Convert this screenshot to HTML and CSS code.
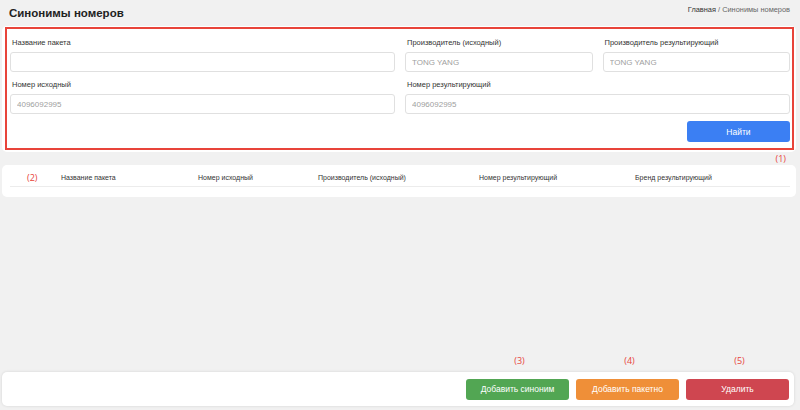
FILE: index.html
```html
<!DOCTYPE html>
<html lang="ru">
<head>
<meta charset="utf-8">
<title>Синонимы номеров</title>
<link rel="stylesheet" href="styles.css">
</head>
<body>
<div class="page">
  <header class="topbar">
    <h1 class="title">Синонимы номеров</h1>
    <nav class="crumbs"><span class="crumb-home">Главная</span> / Синонимы номеров</nav>
  </header>

  <section class="card form-card">
    <div class="mark-box">
      <div class="form-grid">
        <div class="field span2">
          <label class="label">Название пакета</label>
          <input class="input" type="text">
        </div>
        <div class="field">
          <label class="label">Производитель (исходный)</label>
          <input class="input" type="text" placeholder="TONG YANG">
        </div>
        <div class="field">
          <label class="label">Производитель результирующий</label>
          <input class="input" type="text" placeholder="TONG YANG">
        </div>
        <div class="field span2">
          <label class="label">Номер исходный</label>
          <input class="input" type="text" placeholder="4096092995">
        </div>
        <div class="field span2">
          <label class="label">Номер результирующий</label>
          <input class="input" type="text" placeholder="4096092995">
        </div>
      </div>
      <div class="form-actions">
        <button class="btn btn-blue">Найти</button>
      </div>
    </div>
  </section>
  <div class="note-row"><span class="note note-1">(1)</span></div>

  <section class="card table-card">
    <div class="thead">
      <div class="th th-num"><span class="note">(2)</span></div>
      <div class="th">Название пакета</div>
      <div class="th">Номер исходный</div>
      <div class="th">Производитель (исходный)</div>
      <div class="th">Номер результирующий</div>
      <div class="th">Бренд результирующий</div>
    </div>
  </section>

  <div class="footer-wrap">
    <div class="notes-row">
      <span class="note note-btn">(3)</span>
      <span class="note note-btn">(4)</span>
      <span class="note note-btn">(5)</span>
    </div>
    <footer class="card footer-bar">
      <button class="btn btn-green">Добавить синоним</button>
      <button class="btn btn-orange">Добавить пакетно</button>
      <button class="btn btn-red">Удалить</button>
    </footer>
  </div>
</div>
</body>
</html>
```

FILE: styles.css
```css
* { box-sizing: border-box; }
html, body { margin: 0; padding: 0; }
body {
  background: #f1f1f1;
  font-family: "Liberation Sans", Arial, sans-serif;
  color: #333;
}
.page {
  height: 410px;
  display: flex;
  flex-direction: column;
  padding: 0 4px 0 2px;
}
.topbar {
  height: 26px;
  display: flex;
  justify-content: space-between;
  align-items: flex-start;
  padding: 0 6px 0 7px;
}
.title {
  margin: 5px 0 0;
  font-size: 11.5px;
  font-weight: bold;
  color: #222;
  line-height: 16px;
}
.crumbs {
  margin-top: 5px;
  font-size: 7.4px;
  line-height: 10px;
  color: #666;
}
.crumb-home { color: #333; }

.card {
  background: #fff;
  border-radius: 5px;
}
.form-card {
  padding: 1px 2px 2px 3px;
}
.mark-box {
  border: 2px solid #e8443a;
  padding: 9px 0 6px 3px;
  padding-right: 2px;
}
.form-grid {
  display: grid;
  grid-template-columns: repeat(4, 1fr);
  column-gap: 10px;
  row-gap: 8px;
}
.span2 { grid-column: span 2; }
.field { display: flex; flex-direction: column; }
.label {
  font-size: 7.5px;
  line-height: 10px;
  color: #333;
  padding-left: 2px;
  margin-bottom: 4px;
}
.input {
  height: 20px;
  border: 1px solid #e0e0e0;
  border-radius: 3px;
  padding: 0 6px;
  font-family: "Liberation Sans", Arial, sans-serif;
  font-size: 8px;
  color: #333;
  background: #fff;
}
.input::placeholder { color: #a0a0a0; }
.form-actions {
  display: flex;
  justify-content: flex-end;
  margin-top: 7px;
}
.btn {
  width: 103px;
  height: 21px;
  border: none;
  border-radius: 3px;
  color: #fff;
  font-family: "Liberation Sans", Arial, sans-serif;
  font-size: 8.5px;
  padding: 0;
}
.btn-blue { background: #3b7ff3; }
.btn-green { background: #52a653; }
.btn-orange { background: #ef8f38; }
.btn-red { background: #cf4650; }

.note {
  color: #e8443a;
  font-family: "Open Sans", "Liberation Sans", sans-serif;
  font-size: 9px;
  line-height: 12px;
}
.note-row {
  height: 13px;
  display: flex;
  justify-content: flex-end;
  padding-right: 10px;
  padding-top: 1px;
}

.table-card {
  height: 32px;
  padding: 4px 6px 0 8px;
}
.thead {
  display: grid;
  grid-template-columns: 51px 137px 120px 161px 156px 1fr;
  border-bottom: 1px solid #ececec;
  height: 18px;
  align-items: center;
}
.th {
  font-size: 7px;
  color: #333;
  white-space: nowrap;
}
.th-num { padding-left: 17px; }

.footer-wrap {
  margin-top: auto;
  margin-bottom: 4px;
}
.notes-row {
  display: flex;
  justify-content: flex-end;
  gap: 7px;
  padding-right: 5px;
  height: 17px;
}
.note-btn {
  width: 103px;
  text-align: center;
}
.footer-bar {
  height: 34px;
  display: flex;
  justify-content: flex-end;
  align-items: center;
  gap: 7px;
  padding-right: 5px;
  margin-right: 2px;
  box-shadow: 0 0 3px rgba(0,0,0,0.12);
}
```
